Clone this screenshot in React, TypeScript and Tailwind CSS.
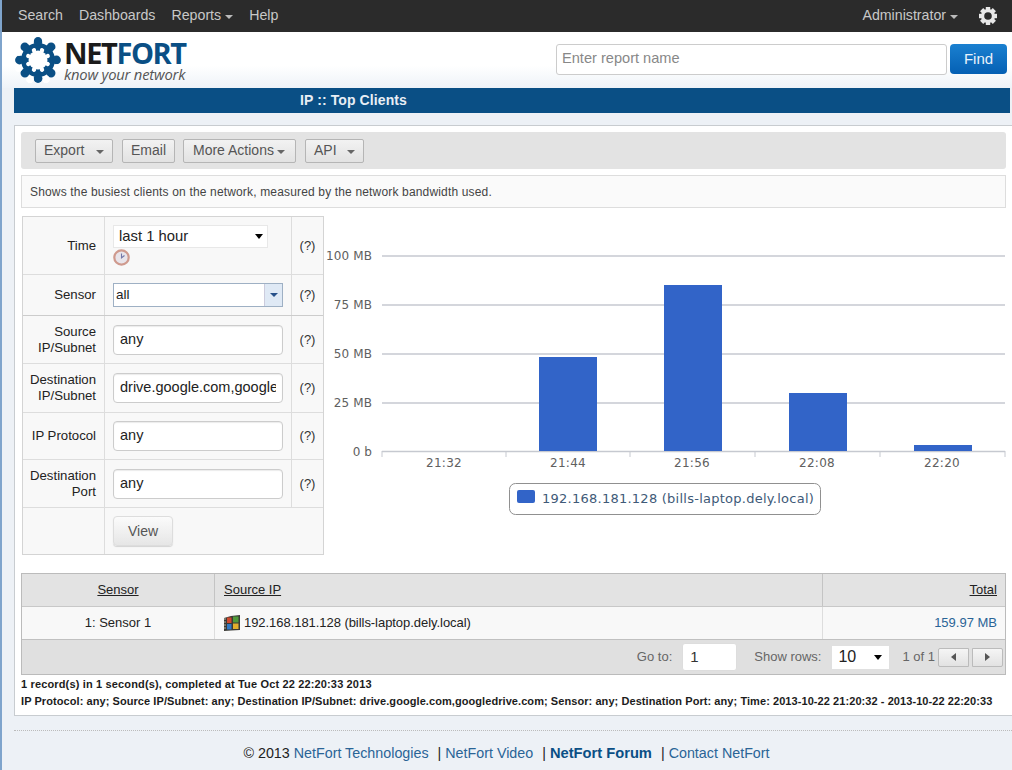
const Caret = ({ className = "" }: { className?: string }) => (
  <span className={`inline-block size-0 border-x-[4px] border-t-[4px] border-x-transparent ${className}`} />
);

const Logo = () => {
  const angles = [0, 45, 90, 135, 180, 225, 270, 315];
  return (
    <svg width="46" height="46" viewBox="0 0 46 46" className="shrink-0">
      <circle cx="23" cy="23" r="17" fill="#0a4f85" />
      {angles.map((a) => (
        <g key={a} transform={`rotate(${a} 23 23)`}>
          <circle cx="23" cy="4.5" r="4.4" fill="#0a4f85" />
          <circle cx="23" cy="12.5" r="2.2" fill="#fff" transform="rotate(22.5 23 23)" />
          <circle cx="23" cy="2" r="3.8" fill="#fff" transform="rotate(22.5 23 23)" />
        </g>
      ))}
      <circle cx="23" cy="23" r="9.5" fill="#fff" />
    </svg>
  );
};

const Gear = () => (
  <svg width="20" height="20" viewBox="0 0 20 20">
    {[0, 45, 90, 135].map((a) => (
      <rect key={a} x="7.8" y="1" width="4.4" height="18" fill="#e8e8e8" transform={`rotate(${a} 10 10)`} />
    ))}
    <circle cx="10" cy="10" r="7" fill="#e8e8e8" />
    <circle cx="10" cy="10" r="3.8" fill="#2b2b2b" />
  </svg>
);

const Clock = () => (
  <svg width="17" height="17" viewBox="0 0 17 17" className="block">
    <circle cx="8.5" cy="8.5" r="7.2" fill="#e8e4ea" stroke="#cf9a8e" strokeWidth="2.2" />
    <path d="M8.5 4.5 V8.8 L11.5 6.5" fill="none" stroke="#7378a8" strokeWidth="1.1" />
  </svg>
);

const WinIcon = () => (
  <svg width="16" height="16" viewBox="0 0 16 16" className="shrink-0">
    <path d="M0 3 L7 1 L16 0 V15 L7 15.5 L0 16 Z" fill="#3a3a36" />
    <rect x="3" y="2.5" width="4.5" height="5.5" fill="#d0492e" />
    <rect x="9" y="1.5" width="5.5" height="6" fill="#4f9a3a" />
    <rect x="3" y="9" width="4.5" height="5.5" fill="#3279c4" />
    <rect x="9" y="8.5" width="5.5" height="5.5" fill="#e2ae2c" />
    <path d="M0 4 H2 M0 7 H2 M0 10 H2 M0 13 H2" stroke="#b9b3a0" strokeWidth="1" />
  </svg>
);

const ToolButton = ({ label, caret, className = "" }: { label: string; caret?: boolean; className?: string }) => (
  <div
    className={`flex h-[24px] items-center rounded-[2px] border border-[#b5b5b5] bg-gradient-to-b from-[#f2f2f2] to-[#e2e2e2] text-[14px] text-[#555] ${className}`}
  >
    {label}
    {caret && <Caret className="mt-[3px] border-t-[#666]" />}
  </div>
);

const TextBox = ({ value }: { value: string }) => (
  <div className="flex h-[30px] w-[170px] items-center rounded-[4px] border border-[#ccc] bg-white px-[6px] text-[14.5px] text-[#222] shadow-[inset_0_1px_1px_rgba(0,0,0,0.08)]">
    <div className="w-full overflow-hidden whitespace-nowrap">{value}</div>
  </div>
);

const FilterRow = ({
  label,
  height,
  children,
  thick = false,
}: {
  label: React.ReactNode;
  height: string;
  children: React.ReactNode;
  thick?: boolean;
}) => (
  <div className={`flex ${height} border-b ${thick ? "border-[#ccc]" : "border-[#ddd]"}`}>
    <div className="flex w-[82px] items-center justify-end border-r border-[#ddd] pr-[8px] text-right text-[13.2px] leading-[16px] text-[#222]">
      {label}
    </div>
    <div className="flex w-[187px] flex-col justify-center border-r border-[#ddd] pl-[8px]">{children}</div>
    <div className="flex flex-1 items-center justify-center text-[13px] text-[#333]">(?)</div>
  </div>
);

const FilterTable = () => (
  <div className="h-[339px] w-[302px] shrink-0 border border-[#d4d4d4] bg-[#f8f8f8]">
    <FilterRow label="Time" height="h-[58px]">
      <div className="flex h-[23px] w-[155px] items-center justify-between border border-[#e8e8e8] bg-white pl-[5px] pr-[4px] text-[14.8px] text-[#222]">
        last 1 hour
        <Caret className="border-x-[4.5px] border-t-[5px] border-t-black" />
      </div>
      <div className="mt-[1px]">
        <Clock />
      </div>
    </FilterRow>
    <FilterRow label="Sensor" height="h-[41px]" thick>
      <div className="flex h-[24px] w-[170px] items-center justify-between border border-[#9eb0c4] bg-white pl-[2px] text-[13.5px] text-[#222]">
        all
        <div className="flex h-full w-[18px] items-center justify-center border-l border-[#ccd] bg-[#dfe9f5]">
          <Caret className="border-t-[#27518a]" />
        </div>
      </div>
    </FilterRow>
    <FilterRow label="Source IP/Subnet" height="h-[48px]">
      <TextBox value="any" />
    </FilterRow>
    <FilterRow label="Destination IP/Subnet" height="h-[49px]">
      <TextBox value="drive.google.com,googledrive.com" />
    </FilterRow>
    <FilterRow label="IP Protocol" height="h-[47px]">
      <TextBox value="any" />
    </FilterRow>
    <FilterRow label="Destination Port" height="h-[48px]">
      <TextBox value="any" />
    </FilterRow>
    <div className="flex h-[46px]">
      <div className="w-[82px] border-r border-[#ddd]" />
      <div className="flex items-center pl-[8px]">
        <div className="flex h-[30px] w-[60px] items-center justify-center rounded-[4px] border border-[#ddd] bg-gradient-to-b from-[#fbfbfb] to-[#e6e6e6] text-[14px] text-[#555] shadow-[0_1px_1px_rgba(0,0,0,0.15)]">
          View
        </div>
      </div>
    </div>
  </div>
);

const yTicks = [
  { y: 40, label: "100 MB" },
  { y: 89, label: "75 MB" },
  { y: 138, label: "50 MB" },
  { y: 187, label: "25 MB" },
  { y: 235.5, label: "0 b" },
];
const xTicks = [58, 182, 306, 431, 556, 681];
const xLabels = ["21:32", "21:44", "21:56", "22:08", "22:20"];
const bars = [
  { x: 215, top: 141 },
  { x: 340, top: 69 },
  { x: 465, top: 177 },
  { x: 590, top: 229 },
];

const Chart = () => (
  <svg width="687" height="339" viewBox="0 0 687 339" className="shrink-0" fontFamily="'DejaVu Sans', sans-serif">
    {yTicks.map((t) => (
      <g key={t.label}>
        <line x1="58" x2="681" y1={t.y} y2={t.y} stroke="#c6c9d0" strokeWidth="1.3" />
        <text x="48" y={t.y + 4} textAnchor="end" fontSize="12" fill="#606060" letterSpacing="0.1">
          {t.label}
        </text>
      </g>
    ))}
    {xTicks.map((x) => (
      <line key={x} x1={x} x2={x} y1="235" y2="241" stroke="#c6c9d0" />
    ))}
    {xLabels.map((l, i) => (
      <text key={l} x={xTicks[i] + 62} y="251" textAnchor="middle" fontSize="12" fill="#606060" letterSpacing="0.3">
        {l}
      </text>
    ))}
    {bars.map((b) => (
      <rect key={b.x} x={b.x} y={b.top} width="58" height={235 - b.top} fill="#3264c8" />
    ))}
    <rect x="185.5" y="267.5" width="311" height="31" rx="6" fill="#fff" stroke="#909090" />
    <rect x="193" y="274" width="18" height="13" rx="2" fill="#3264c8" />
    <text x="218" y="287" fontSize="13" fill="#405a78" letterSpacing="0.25">
      192.168.181.128 (bills-laptop.dely.local)
    </text>
  </svg>
);

const DataTable = () => (
  <div className="w-[985px] border border-[#bbb] text-[13px]">
    <div className="grid h-[33px] grid-cols-[193px_608px_1fr] items-stretch border-b border-[#c8c8c8] bg-[#e3e3e3] text-[#222]">
      <div className="flex items-center justify-center border-r border-[#c4c4c4] underline">Sensor</div>
      <div className="flex items-center border-r border-[#c4c4c4] pl-[9px] underline">Source IP</div>
      <div className="flex items-center justify-end pr-[8px] underline">Total</div>
    </div>
    <div className="grid h-[33px] grid-cols-[193px_608px_1fr] items-stretch border-b border-[#c0c0c0] bg-[#f8f8f8] text-[#222]">
      <div className="flex items-center justify-center border-r border-[#ddd]">1: Sensor 1</div>
      <div className="flex items-center gap-[4px] border-r border-[#ddd] pl-[9px] tracking-[-0.05px]">
        <WinIcon />
        192.168.181.128 (bills-laptop.dely.local)
      </div>
      <div className="flex items-center justify-end pr-[8px] text-[#2a6496]">159.97 MB</div>
    </div>
    <div className="flex h-[34px] items-center justify-end bg-[#e0e0e0] pr-[2px] text-[13px] text-[#666]">
      <span className="mr-[10px]">Go to:</span>
      <div className="mr-[17px] flex h-[28px] w-[55px] items-center rounded-[3px] border border-[#ddd] bg-white pl-[7px] text-[15px] text-[#333]">
        1
      </div>
      <span className="mr-[11px]">Show rows:</span>
      <div className="mr-[13px] flex h-[23px] w-[57px] items-center justify-between bg-white pl-[6px] pr-[7px] text-[16px] text-[#222]">
        10
        <Caret className="border-x-[4.5px] border-t-[5px] border-t-black" />
      </div>
      <span className="mr-[3px]">1 of 1</span>
      <div className="flex h-[19px] w-[31px] items-center justify-center rounded-l-[2px] border border-[#bbb] bg-gradient-to-b from-[#f5f5f5] to-[#e2e2e2]">
        <span className="size-0 border-y-[4px] border-r-[5px] border-y-transparent border-r-[#555]" />
      </div>
      <div className="ml-[3px] flex h-[19px] w-[31px] items-center justify-center rounded-r-[2px] border border-[#bbb] bg-gradient-to-b from-[#f5f5f5] to-[#e2e2e2]">
        <span className="size-0 border-y-[4px] border-l-[5px] border-y-transparent border-l-[#555]" />
      </div>
    </div>
  </div>
);

export default function App() {
  return (
    <div className="h-[770px] w-[1012px] overflow-hidden border-l-2 border-[#7fa4cc] bg-[#edf1f6] font-['Liberation_Sans',Arial,sans-serif]">
      {/* top nav */}
      <div className="flex h-[32px] items-center justify-between bg-[#2b2b2b] pl-[16px] pr-[14px] text-[14.2px] text-[#c8c8c8]">
        <div className="flex items-center gap-[16px]">
          <span>Search</span>
          <span>Dashboards</span>
          <span className="flex items-center gap-[4px]">
            Reports <Caret className="mt-[3px] border-x-[2.5px] border-t-[3px] border-t-[#bbb]" />
          </span>
          <span>Help</span>
        </div>
        <div className="flex items-center gap-[4px]">
          <span>Administrator</span>
          <Caret className="mt-[3px] border-x-[2.5px] border-t-[3px] border-t-[#bbb]" />
          <div className="ml-[16px]">
            <Gear />
          </div>
        </div>
      </div>

      {/* logo + search */}
      <div className="flex h-[56px] items-center justify-between bg-gradient-to-b from-white from-60% to-[#eef3f8] pl-[13px] pr-[5px]">
        <div className="flex items-center gap-[3px]">
          <Logo />
          <div className="flex flex-col font-['Open_Sans',sans-serif]">
            <div className="text-[29px] font-bold leading-[28px] tracking-[-1.4px] text-[#1b1b1b]">
              NET<span className="text-[#0a4f85]">FORT</span>
            </div>
            <div className="text-[14.8px] italic leading-[15px] tracking-[-0.2px] text-[#555]">know your network</div>
          </div>
        </div>
        <div className="mb-[2px] flex items-center gap-[3px]">
          <div className="flex h-[31px] w-[391px] items-center rounded-[3px] border border-[#ccc] bg-white pl-[5px] text-[14.6px] text-[#888]">
            Enter report name
          </div>
          <div className="flex h-[30px] w-[57px] items-center justify-center rounded-[4px] bg-gradient-to-b from-[#1a80d0] to-[#0560b4] text-[15px] text-[#e8f2fb]">
            Find
          </div>
        </div>
      </div>

      {/* title */}
      <div className="ml-[12px] flex h-[25px] w-[996px] items-center bg-[#0a4f85] pl-[286px] text-[14px] font-bold tracking-[0.1px] text-[#e8eef5]">
        IP :: Top Clients
      </div>

      {/* panel */}
      <div className="ml-[12px] mt-[12px] h-[591px] w-[1010px] border border-[#c8ccd0] bg-white pl-[6px] pt-[6px]">
        <div className="flex h-[37px] w-[985px] items-center gap-[9px] rounded-[3px] bg-[#e3e3e3] pl-[14px]">
          <ToolButton label="Export" caret className="w-[78px] justify-between pl-[8px] pr-[8px]" />
          <ToolButton label="Email" className="w-[53px] justify-center" />
          <ToolButton label="More Actions" caret className="-ml-[1px] w-[113px] gap-[3px] pl-[9px]" />
          <ToolButton label="API" caret className="w-[59px] justify-between pl-[8px] pr-[8px]" />
        </div>
        <div className="mt-[6px] flex h-[33px] w-[985px] items-center border border-[#ddd] bg-[#fafafa] pl-[8px] text-[12px] tracking-[0.16px] text-[#444]">
          Shows the busiest clients on the network, measured by the network bandwidth used.
        </div>
        <div className="ml-[1px] mt-[8px] flex">
          <FilterTable />
          <Chart />
        </div>
        <div className="mt-[18px]">
          <DataTable />
        </div>
        <div className="mt-[1px] text-[11px] font-bold leading-[17px] text-[#1c1c1c]">
          <div className="tracking-[0.15px]">1 record(s) in 1 second(s), completed at Tue Oct 22 22:20:33 2013</div>
          <div className="tracking-[0.07px]">
            IP Protocol: any; Source IP/Subnet: any; Destination IP/Subnet: drive.google.com,googledrive.com; Sensor: any; Destination Port: any; Time: 2013-10-22 21:20:32 - 2013-10-22 22:20:33
          </div>
        </div>
      </div>

      {/* footer */}
      <div className="ml-[12px] mt-[14px] border-t border-dotted border-[#bbb] pr-[13px] pt-[13px] text-center text-[14.3px] leading-[18px] text-[#222]">
        © 2013 <span className="text-[#2a6496]">NetFort Technologies</span>
        <span className="ml-[9px]">|</span> <span className="text-[#2a6496]">NetFort Video</span>
        <span className="ml-[9px]">|</span> <span className="text-[14.7px] font-bold text-[#0a4f85]">NetFort Forum</span>
        <span className="ml-[9px]">|</span> <span className="text-[#2a6496]">Contact NetFort</span>
      </div>
    </div>
  );
}
